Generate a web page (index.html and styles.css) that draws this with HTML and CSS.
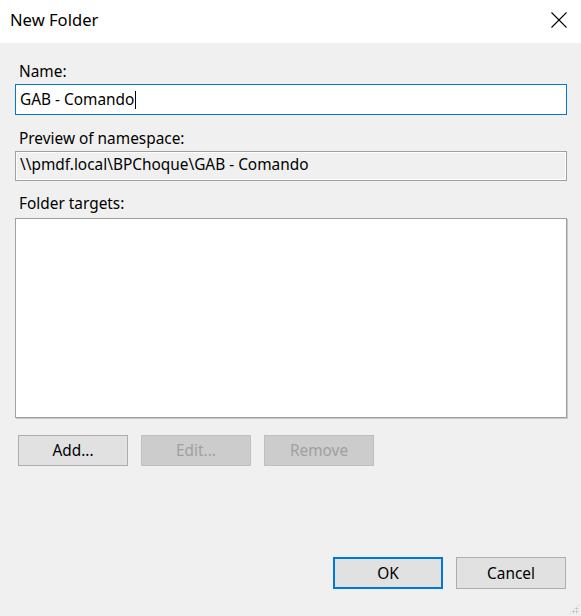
FILE: index.html
```html
<!DOCTYPE html>
<html>
<head>
<meta charset="utf-8">
<link rel="stylesheet" href="styles.css">
</head>
<body>
<div class="dialog">
  <div class="titlebar">
    <span class="title">New Folder</span>
    <span class="close">
      <svg width="16" height="16" viewBox="0 0 16 16"><path d="M0.5 0.5 L15.5 15.5 M15.5 0.5 L0.5 15.5" stroke="#000" stroke-width="1.1" fill="none"/></svg>
    </span>
  </div>
  <div class="body">
    <div class="label l-name">Name:</div>
    <div class="input focused">GAB - Comando<span class="caret"></span></div>
    <div class="label l-preview">Preview of namespace:</div>
    <div class="input readonly">\\pmdf.local\BPChoque\GAB - Comando</div>
    <div class="label l-targets">Folder targets:</div>
    <div class="listbox"></div>
    <div class="row">
      <div class="btn">Add...</div>
      <div class="btn disabled">Edit...</div>
      <div class="btn disabled">Remove</div>
    </div>
    <div class="footer">
      <div class="btn default">OK</div>
      <div class="btn">Cancel</div>
    </div>
  </div>
  <div class="grip"></div>
</div>
</body>
</html>
```
FILE: styles.css
```css
html, body {
  margin: 0;
  padding: 0;
}
body {
  width: 581px;
  height: 616px;
  overflow: hidden;
  font-family: "Noto Sans", "Open Sans", sans-serif;
  font-size: 15.4px;
  color: #000;
}
.dialog {
  position: relative;
  width: 581px;
  height: 616px;
  display: flex;
  flex-direction: column;
  background: #f0f0f0;
}
.titlebar {
  height: 43px;
  flex: none;
  background: #fff;
  display: flex;
  align-items: center;
  justify-content: space-between;
  padding: 0 14px 0 10px;
}
.title {
  font-size: 16.6px;
  line-height: 20px;
  margin-top: -4px;
}
.close {
  display: flex;
  width: 16px;
  height: 16px;
  margin-top: -4px;
}
.body {
  flex: 1;
  display: flex;
  flex-direction: column;
  padding: 0 14px 27px 15px;
}
.label {
  line-height: 20px;
  padding-left: 4px;
  color: #000;
}
.l-name { margin-top: 19px; margin-bottom: 2px; }
.l-preview { margin-top: 14px; margin-bottom: 2px; }
.l-targets { margin-top: 13px; margin-bottom: 4px; }
.input {
  box-sizing: border-box;
  height: 31px;
  line-height: 29px;
  padding-left: 4px;
  border: 1px solid #7a7a7a;
  background: #fff;
  white-space: nowrap;
}
.input.focused {
  border-color: #0078d7;
}
.caret {
  display: inline-block;
  width: 1px;
  height: 18px;
  background: #000;
  vertical-align: middle;
  margin-left: 1px;
  margin-top: -2px;
}
.input.readonly {
  height: 30px;
  line-height: 26px;
  background: #f0f0f0;
  border: 1px solid #a0a0a0;
  box-shadow: inset 1px 1px 0 #fff, inset -1px -1px 0 #fff;
}
.listbox {
  box-sizing: border-box;
  height: 200px;
  background: #fff;
  border: 1px solid #a0a0a0;
  border-right-color: #9a9ea6;
  border-bottom-color: #9a9ea6;
  box-shadow: 1px 1px 0 #c8c8c8;
}
.row {
  display: flex;
  gap: 13px;
  margin-top: 17px;
  padding-left: 3px;
}
.btn {
  box-sizing: border-box;
  width: 110px;
  height: 31px;
  display: flex;
  align-items: center;
  justify-content: center;
  background: #e1e1e1;
  border: 1px solid #adadad;
  font-size: 15.4px;
}
.btn.disabled {
  background: #cccccc;
  border-color: #bfbfbf;
  color: #a0a0a0;
}
.footer {
  margin-top: auto;
  display: flex;
  justify-content: flex-end;
  gap: 13px;
  padding-right: 1px;
}
.footer .btn {
  height: 32px;
}
.btn.default {
  border: 2px solid #0078d7;
}
.grip {
  position: absolute;
  right: 2px;
  bottom: 2px;
  width: 10px;
  height: 10px;
  background:
    radial-gradient(circle, #b8b8b8 0.8px, transparent 1.2px) 0 0 / 3px 3px;
  clip-path: polygon(100% 0, 100% 100%, 0 100%);
}
```
